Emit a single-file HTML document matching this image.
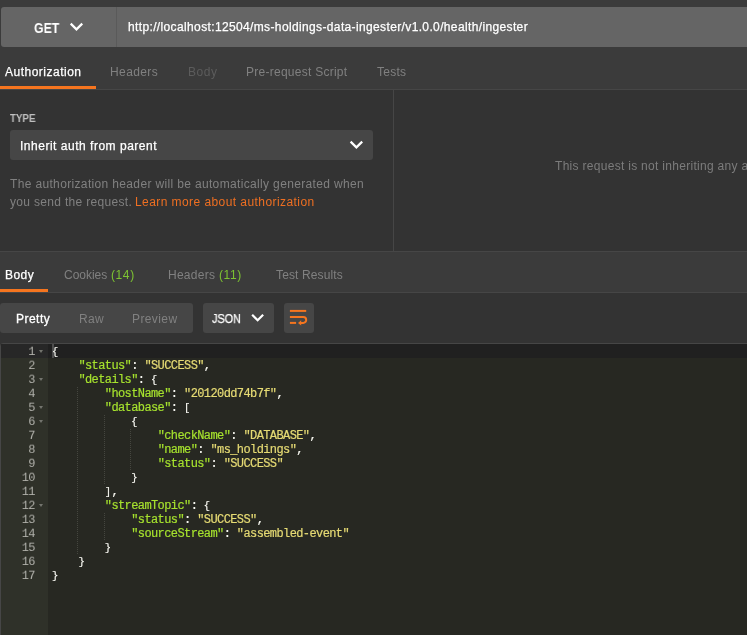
<!DOCTYPE html>
<html><head><meta charset="utf-8">
<style>
*{box-sizing:border-box;margin:0;padding:0}
html,body{width:747px;height:635px;overflow:hidden;background:#333;font-family:"Liberation Sans",sans-serif;}
body{position:relative;color:#fff;font-size:12px}
.abs{position:absolute}
.t{will-change:transform;position:absolute;line-height:18px;white-space:nowrap;font-family:"Liberation Sans",sans-serif}
#topbg{left:0;top:0;width:747px;height:54px;background:#3b3b3b}
#urlbar{left:1px;top:7px;width:760px;height:40px;background:#656565;border-radius:3px}
#sep{left:116px;top:7px;width:1px;height:40px;background:#5a5a5a}
#reqtabs{left:0;top:54px;width:747px;height:36px;background:#3b3b3b;border-bottom:1px solid #464646}
#reqpanel{left:0;top:90px;width:747px;height:161px;background:#333}
#vline{left:393px;top:90px;width:1px;height:161px;background:#464646}
#select{left:10px;top:130px;width:363px;height:30px;background:#464646;border-radius:3px}
#resphead{left:0;top:251px;width:747px;height:42px;background:#3b3b3b;border-top:1px solid #464646;border-bottom:1px solid #464646}
#btngrp{left:0;top:303px;width:193px;height:30px;background:#464646;border-radius:3px}
#jsonbtn{left:203px;top:303px;width:71px;height:30px;background:#464646;border-radius:3px}
#wrapbtn{left:284px;top:303px;width:30px;height:30px;background:#464646;border-radius:3px}
#edtop{left:0;top:343px;width:760px;height:300px;border:1px solid #464646;border-radius:3px;background:#272822}
#cursor{left:52px;top:344px;width:2px;height:14px;background:#4e4e4e}
#editor{left:1px;top:344px;width:746px;height:300px;background:#272822}
#gutter{left:1px;top:344px;width:47px;height:300px;background:#2f3129}
#activeline{left:48px;top:344px;width:699px;height:14px;background:#202020}
#activegut{left:1px;top:344px;width:47px;height:14px;background:#272727}
.ln{will-change:transform;position:absolute;left:0;width:34.9px;letter-spacing:-0.6px;transform:scaleY(0.93);transform-origin:0 10.5px;text-align:right;font-family:"Liberation Mono",monospace;font-size:12px;line-height:14px;color:#b0b0aa;height:14px}
.code{will-change:transform;position:absolute;left:52px;font-family:"Liberation Mono",monospace;font-size:12px;letter-spacing:-0.6px;line-height:14px;color:#f8f8f2;white-space:pre;height:14px;-webkit-text-stroke:0.2px}
.b{font-size:10.5px;letter-spacing:0.3px}.k{color:#a6e22e}.s{color:#e6db74}
.fold{position:absolute;left:38.6px;width:0;height:0;border-left:2.7px solid transparent;border-right:2.7px solid transparent;border-top:3.2px solid #74756e}
.guide{position:absolute;width:0;border-left:1px dotted #45463f}
.orange{background:#f5751f}
</style></head><body>
<div class="abs" id="topbg"></div>
<div class="abs" id="urlbar"></div>
<div class="abs" id="sep"></div>
<div class="abs" id="reqtabs"></div>
<div class="abs orange" style="left:0;top:86px;width:96px;height:3px"></div>
<div class="abs" id="reqpanel"></div>
<div class="abs" id="vline"></div>
<div class="abs" id="select"></div>
<div class="abs" id="resphead"></div>
<div class="abs orange" style="left:0;top:289px;width:48px;height:3px"></div>
<div class="abs" id="btngrp"></div>
<div class="abs" id="jsonbtn"></div>
<div class="abs" id="wrapbtn"></div>
<svg class="abs" style="left:284px;top:303px" width="30" height="30" viewBox="0 0 30 30"><g fill="none" stroke="#f5751f" stroke-width="2"><path d="M5.9 7.9 H22.2"/><path d="M5.9 14 H19.25 a2.95 2.95 0 0 1 0 5.9 H16.5"/><path d="M5.9 19.9 H12.1"/></g><path d="M17.2 17.2 L14 19.9 L17.2 22.6 Z" fill="#f5751f"/></svg>
<svg class="abs" style="left:0;top:0;z-index:5" width="747" height="635" viewBox="0 0 747 635"><g fill="none" stroke="#fff" stroke-width="2.2"><path d="M70.7 23.6 L76.47 29.35 L82.24 23.6"/><path d="M350.6 141.6 L356.4 147.4 L362.2 141.6"/><path d="M252.15 314.8 L257.65 320.3 L263.15 314.8"/></g></svg>
<div class="t" style="left:34.0px;top:19px;color:#fff;font-size:14px;transform-origin:0 0;transform:scaleX(0.8759);font-weight:bold;">GET</div>
<div class="t" style="left:128.2px;top:18px;color:#fff;font-size:12px;letter-spacing:0.363px;-webkit-text-stroke:0.25px #fff;">http://localhost:12504/ms-holdings-data-ingester/v1.0.0/health/ingester</div>
<div class="t" style="left:5.0px;top:63px;color:#fff;font-size:12px;letter-spacing:0.5px;-webkit-text-stroke:0.25px #fff;">Authorization</div>
<div class="t" style="left:110.1px;top:63px;color:#808080;font-size:12px;letter-spacing:0.4px;">Headers</div>
<div class="t" style="left:187.5px;top:63px;color:#5c5c5c;font-size:12px;letter-spacing:0.533px;">Body</div>
<div class="t" style="left:245.5px;top:63px;color:#808080;font-size:12px;letter-spacing:0.259px;">Pre-request Script</div>
<div class="t" style="left:377.3px;top:63px;color:#808080;font-size:12px;letter-spacing:0.25px;">Tests</div>
<div class="t" style="left:10.0px;top:109px;color:#c0c0c0;font-size:11px;transform-origin:0 0;transform:scaleX(0.8829);font-weight:bold;">TYPE</div>
<div class="t" style="left:19.9px;top:137px;color:#fff;font-size:12px;letter-spacing:0.513px;-webkit-text-stroke:0.25px #fff;">Inherit auth from parent</div>
<div class="t" style="left:10.0px;top:175px;color:#808080;font-size:12px;letter-spacing:0.347px;">The authorization header will be automatically generated when</div>
<div class="t" style="left:10.0px;top:193px;color:#808080;font-size:12px;letter-spacing:0.32px;">you send the request.</div>
<div class="t" style="left:134.6px;top:193px;color:#ee6f22;font-size:12px;letter-spacing:0.428px;">Learn more about authorization</div>
<div class="t" style="left:554.5px;top:157px;color:#7c7c7c;font-size:12px;letter-spacing:0.297px;">This request is not inheriting any authorization helper</div>
<div class="t" style="left:4.8px;top:266px;color:#fff;font-size:12px;letter-spacing:0.467px;-webkit-text-stroke:0.25px #fff;">Body</div>
<div class="t" style="left:63.9px;top:266px;color:#808080;font-size:12px;letter-spacing:-0.033px;">Cookies</div>
<div class="t" style="left:111.1px;top:266px;color:#7dc332;font-size:12px;letter-spacing:0.6px;">(14)</div>
<div class="t" style="left:167.9px;top:266px;color:#808080;font-size:12px;letter-spacing:0.267px;">Headers</div>
<div class="t" style="left:219.3px;top:266px;color:#7dc332;font-size:12px;letter-spacing:0.6px;">(11)</div>
<div class="t" style="left:276.2px;top:266px;color:#808080;font-size:12px;letter-spacing:0.127px;">Test Results</div>
<div class="t" style="left:16.1px;top:310px;color:#fff;font-size:12px;letter-spacing:0.48px;-webkit-text-stroke:0.3px #fff;">Pretty</div>
<div class="t" style="left:78.8px;top:310px;color:#808080;font-size:12px;letter-spacing:0.3px;">Raw</div>
<div class="t" style="left:132.3px;top:310px;color:#808080;font-size:12px;letter-spacing:0.4px;">Preview</div>
<div class="t" style="left:212.0px;top:310px;color:#fff;font-size:12px;transform-origin:0 0;transform:scaleX(0.9035);-webkit-text-stroke:0.25px #fff;">JSON</div>
<div class="abs" id="edtop"></div>
<div class="abs" id="editor"></div>
<div class="abs" id="gutter"></div>
<div class="abs" id="activeline"></div>
<div class="abs" id="activegut"></div>
<div class="abs" id="cursor"></div>
<div class="ln" style="top:345px">1</div>
<div class="fold" style="top:350px"></div>
<div class="code" style="top:345px"><span class="b">{</span></div>
<div class="ln" style="top:359px">2</div>
<div class="code" style="top:359px">    <span class="k">"status"</span>: <span class="s">"SUCCESS"</span>,</div>
<div class="ln" style="top:373px">3</div>
<div class="fold" style="top:378px"></div>
<div class="code" style="top:373px">    <span class="k">"details"</span>: <span class="b">{</span></div>
<div class="ln" style="top:387px">4</div>
<div class="code" style="top:387px">        <span class="k">"hostName"</span>: <span class="s">"20120dd74b7f"</span>,</div>
<div class="ln" style="top:401px">5</div>
<div class="fold" style="top:406px"></div>
<div class="code" style="top:401px">        <span class="k">"database"</span>: <span class="b">[</span></div>
<div class="ln" style="top:415px">6</div>
<div class="fold" style="top:420px"></div>
<div class="code" style="top:415px">            <span class="b">{</span></div>
<div class="ln" style="top:429px">7</div>
<div class="code" style="top:429px">                <span class="k">"checkName"</span>: <span class="s">"DATABASE"</span>,</div>
<div class="ln" style="top:443px">8</div>
<div class="code" style="top:443px">                <span class="k">"name"</span>: <span class="s">"ms_holdings"</span>,</div>
<div class="ln" style="top:457px">9</div>
<div class="code" style="top:457px">                <span class="k">"status"</span>: <span class="s">"SUCCESS"</span></div>
<div class="ln" style="top:471px">10</div>
<div class="code" style="top:471px">            <span class="b">}</span></div>
<div class="ln" style="top:485px">11</div>
<div class="code" style="top:485px">        <span class="b">]</span>,</div>
<div class="ln" style="top:499px">12</div>
<div class="fold" style="top:504px"></div>
<div class="code" style="top:499px">        <span class="k">"streamTopic"</span>: <span class="b">{</span></div>
<div class="ln" style="top:513px">13</div>
<div class="code" style="top:513px">            <span class="k">"status"</span>: <span class="s">"SUCCESS"</span>,</div>
<div class="ln" style="top:527px">14</div>
<div class="code" style="top:527px">            <span class="k">"sourceStream"</span>: <span class="s">"assembled-event"</span></div>
<div class="ln" style="top:541px">15</div>
<div class="code" style="top:541px">        <span class="b">}</span></div>
<div class="ln" style="top:555px">16</div>
<div class="code" style="top:555px">    <span class="b">}</span></div>
<div class="ln" style="top:569px">17</div>
<div class="code" style="top:569px"><span class="b">}</span></div>
<div class="guide" style="left:77.2px;top:387px;height:167px"></div>
<div class="guide" style="left:103.6px;top:415px;height:69px"></div>
<div class="guide" style="left:103.6px;top:513px;height:27px"></div>
<div class="guide" style="left:130.0px;top:429px;height:41px"></div>

</body></html>
